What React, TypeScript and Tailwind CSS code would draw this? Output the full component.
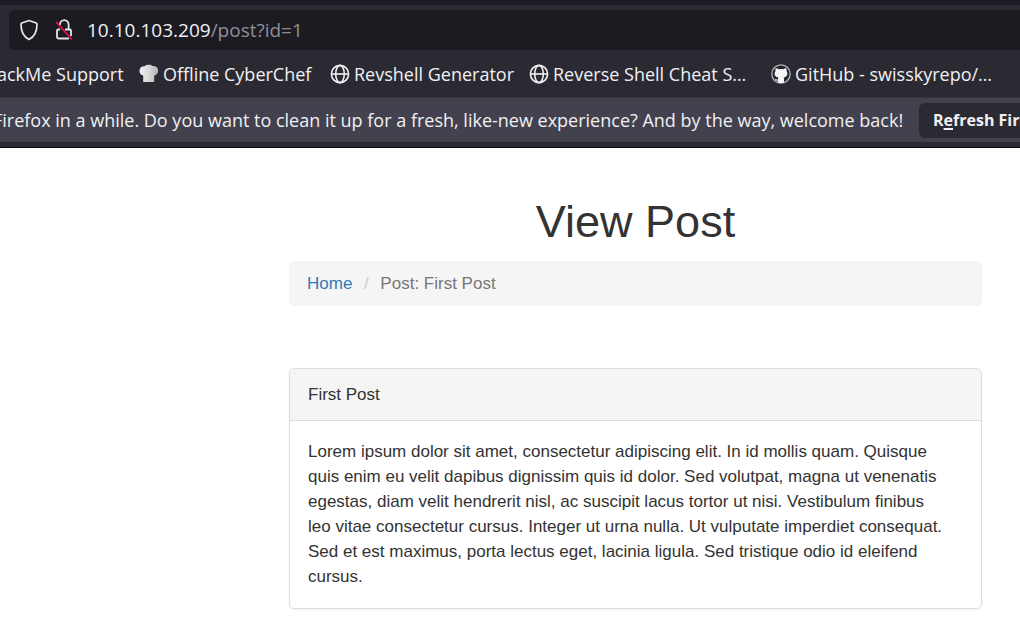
function ShieldIcon() {
  return (
    <svg width="20" height="22" viewBox="0 0 20 22" fill="none" stroke="#e6e6ea" strokeWidth="1.7" strokeLinejoin="round" aria-hidden="true">
      <path d="M10 1.5 17.200 4q.8.3.8 1.200C18 12.500 15.500 17.700 10 20.500 4.500 17.700 2 12.500 2 5.200Q2 4.300 2.800 4Z" />
    </svg>
  );
}

function InsecureLockIcon() {
  return (
    <svg width="18" height="22" viewBox="0 0 18 22" fill="none" aria-hidden="true">
      <path d="M5 6V5.500a4.300 4.300 0 0 1 8.600 0V10M5 10.500H3.200Q2 10.500 2 11.700V18q0 1.500 1.500 1.500H14M10 10.500h4.700q1.300 0 1.300 1.300V17" stroke="#e6e6ea" strokeWidth="1.800" />
      <path d="m1 3 16 17.500" stroke="#e3124a" strokeWidth="1.800" />
    </svg>
  );
}

function ChefHatIcon() {
  return (
    <svg className="shrink-0" width="20" height="20" viewBox="0 0 20 20" aria-hidden="true">
      <defs>
        <linearGradient id="hat" x1="0" x2="1" y1="0" y2="0">
          <stop offset="0" stopColor="#f0f0f0" />
          <stop offset="0.5" stopColor="#d8d8d8" />
          <stop offset="1" stopColor="#b2b2b2" />
        </linearGradient>
      </defs>
      <path d="M4.200 18V11.600C1.600 11 .4 8.800.5 6.400.6 3.600 3 1.800 5.600 2.200 7.500.4 11.800.2 13.600 2c3-.2 5.400 1.400 5.500 4.200.1 2.700-1.300 4.800-3.900 5.400V18Z" fill="url(#hat)" />
    </svg>
  );
}

function GlobeIcon() {
  return (
    <svg className="shrink-0" width="20" height="20" viewBox="0 0 20 20" fill="none" stroke="#f0f0f4" strokeWidth="1.600" aria-hidden="true">
      <circle cx="10" cy="10" r="8.600" />
      <ellipse cx="10" cy="10" rx="4.300" ry="8.600" />
      <path d="M1.400 10h17.200" />
    </svg>
  );
}

function GithubIcon() {
  return (
    <svg className="shrink-0" width="20" height="20" viewBox="0 0 20 20" aria-hidden="true">
      <circle cx="10" cy="10" r="9.200" fill="#25242c" stroke="#b4b4ba" strokeWidth="1.300" />
      <path
        d="M4.700 4.200q1.600.1 3.100 1.100a9 9 0 0 1 4.400 0q1.500-1 3.100-1.100.6 1.400.2 2.700c1.800 2.600.8 6.200-3 6.600.5.500.6 1.100.6 1.900V18.800q-3.100.9-6.200 0v-2.200c-1.700.3-2.300-.5-2.900-1.600.9-.1 1.700.9 2.900.7 0-1 .1-1.700.6-2.200-3.800-.4-4.800-4-3-6.600q-.4-1.300.2-2.700Z"
        fill="#f6f6f8"
      />
    </svg>
  );
}

const bookmarks = [
  { label: "Offline CyberChef", icon: <ChefHatIcon />, width: "w-[191px]" },
  { label: "Revshell Generator", icon: <GlobeIcon />, width: "w-[199px]" },
  { label: "Reverse Shell Cheat S…", icon: <GlobeIcon />, width: "w-[242px]" },
  { label: "GitHub - swisskyrepo/…", icon: <GithubIcon />, width: "w-[242px]" },
];

const postLines = [
  "Lorem ipsum dolor sit amet, consectetur adipiscing elit. In id mollis quam. Quisque",
  "quis enim eu velit dapibus dignissim quis id dolor. Sed volutpat, magna ut venenatis",
  "egestas, diam velit hendrerit nisl, ac suscipit lacus tortor ut nisi. Vestibulum finibus",
  "leo vitae consectetur cursus. Integer ut urna nulla. Ut vulputate imperdiet consequat.",
  "Sed et est maximus, porta lectus eget, lacinia ligula. Sed tristique odio id eleifend",
  "cursus.",
];

function BrowserChrome() {
  return (
    <header className="overflow-hidden border-t-[5px] border-[#1c1b22] bg-[#2b2a33] font-['Open_Sans','Noto_Sans',sans-serif] text-[#f0f0f4]">
      <div className="pt-[5px] pl-[9px]">
        <div className="flex h-10 items-center rounded-l-md bg-[#1c1b22] pl-[10px]">
          <button type="button" aria-label="Tracking protection" className="mr-4">
            <ShieldIcon />
          </button>
          <button type="button" aria-label="Connection not secure" className="mr-[14px]">
            <InsecureLockIcon />
          </button>
          <div className="text-[19px] whitespace-nowrap">
            10.10.103.209<span className="text-[#8f8f97]">/post?id=1</span>
          </div>
        </div>
      </div>
      <nav aria-label="Bookmarks" className="flex h-[47px] items-center text-lg whitespace-nowrap">
        <a href="#support" className="-ml-[3px] w-[142px] shrink-0">
          ackMe Support
        </a>
        {bookmarks.map((bookmark) => (
          <a key={bookmark.label} href="#bookmark" className={`flex shrink-0 items-center gap-1 ${bookmark.width}`}>
            {bookmark.icon}
            {bookmark.label}
          </a>
        ))}
      </nav>
      <div className="flex h-[45px] items-center border-t border-[#38373f] bg-[#42414d] whitespace-nowrap">
        <p className="-ml-[7px] w-[926px] shrink-0 text-lg">
          Firefox in a while. Do you want to clean it up for a fresh, like-new experience? And by the way, welcome back!
        </p>
        <button type="button" className="h-[35px] shrink-0 rounded-md bg-[#2b2a33] px-[14px] text-base font-bold">
          R<span className="underline decoration-2 underline-offset-2">e</span>fresh Firefox…
        </button>
      </div>
      <div className="h-[6px] border-b border-[#0c0c0d]" />
    </header>
  );
}

export default function App() {
  return (
    <div className="min-h-screen overflow-x-hidden bg-white">
      <BrowserChrome />
      <main className="mr-[38px] ml-[289px] pt-[49px] font-['Liberation_Sans',Arial,sans-serif] text-[17px] leading-[25px] text-[#333333]">
        <h1 className="text-center text-[45px] leading-[50px]">View Post</h1>
        <nav aria-label="Breadcrumb" className="mt-[14px] rounded-[5px] bg-[#f5f5f5] px-[18px] py-[10px]">
          <ol className="flex">
            <li>
              <a href="#home" className="text-[#337ab7]">
                Home
              </a>
            </li>
            <li aria-hidden="true" className="w-[28px] text-center text-[#cccccc]">
              /
            </li>
            <li className="text-[#777777]">Post: First Post</li>
          </ol>
        </nav>
        <article className="mt-[62px] rounded-[5px] border border-[#dddddd] shadow-xs">
          <h2 className="rounded-t border-b border-[#dddddd] bg-[#f5f5f5] px-[18px] py-[13px]">First Post</h2>
          <p className="px-[18px] pt-[18px] pb-[19px]">
            {postLines.map((line) => (
              <span key={line} className="block">
                {line}
              </span>
            ))}
          </p>
        </article>
      </main>
    </div>
  );
}
